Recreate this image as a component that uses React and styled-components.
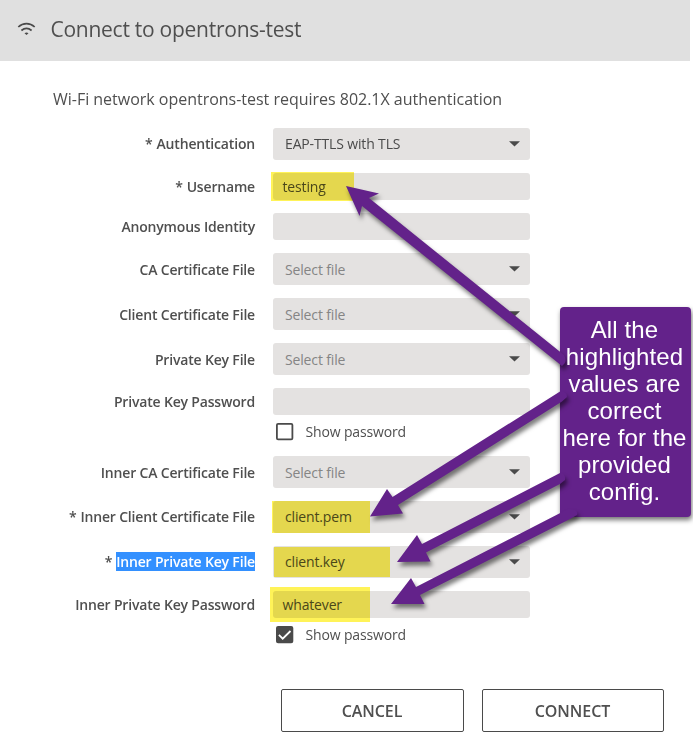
import React from 'react';
import styled, { createGlobalStyle } from 'styled-components';

const GlobalStyle = createGlobalStyle`
  * { box-sizing: border-box; }
  body { margin: 0; background: #fff; overflow: hidden; }
`;

const Page = styled.main`
  position: relative;
  width: 693px;
  height: 748px;
  background: #fff;
  color: #4f4f4f;
  font-family: 'Open Sans', 'Noto Sans', sans-serif;
`;

const Header = styled.header`
  display: flex;
  align-items: center;
  width: 690px;
  height: 61px;
  padding: 0 0 3px 17px;
  gap: 14.5px;
  background: #e0e0e0;
`;

const Title = styled.h1`
  margin: 0;
  font-size: 21px;
  font-weight: 400;
  line-height: 30px;
  letter-spacing: -0.26px;
`;

const Intro = styled.p`
  margin: 0;
  padding: 27px 0 0 53px;
  height: 67px;
  font-size: 16px;
  line-height: 22px;
  letter-spacing: -0.015px;
`;

const Form = styled.form`
  display: flex;
  flex-direction: column;
  gap: 13px;
  width: 530px;
`;

const Row = styled.div`
  display: grid;
  grid-template-columns: 255px 257px;
  column-gap: 18px;
  letter-spacing: -0.15px;
`;

const Label = styled.label`
  display: flex;
  align-items: center;
  justify-content: flex-end;
  gap: 4px;
  padding-bottom: ${(p) => (p.$raised ? 2 : 0)}px;
  font-size: 14px;
  font-weight: 600;
  line-height: 19px;
  letter-spacing: -0.175px;
  white-space: pre;
`;

const Selected = styled.span`
  background: #3390ff;
  color: #fff;
`;

const Field = styled.div`
  position: relative;
  display: flex;
  align-items: center;
  justify-content: space-between;
  height: ${(p) => (p.$select ? 32 : 27)}px;
  padding: 0 10px 0 ${(p) => (p.$select ? 12 : 9.5)}px;
  border-radius: 3px;
  background: #e4e2e1;
  color: ${(p) => (p.$placeholder ? '#858585' : '#4a4a4a')};
  font-size: 14px;
  line-height: 19px;
`;

const Value = styled.span`
  padding-bottom: ${(p) => (p.$raised ? 2 : 0)}px;
`;

const Marker = styled.span`
  position: absolute;
  left: ${(p) => p.$box[0]}px;
  top: ${(p) => p.$box[1]}px;
  width: ${(p) => p.$box[2]}px;
  height: ${(p) => p.$box[3]}px;
  background: #fff358;
  mix-blend-mode: multiply;
`;

const CheckLine = styled.div`
  grid-column: 2;
  display: flex;
  align-items: center;
  height: 28px;
  padding: 5px 0 0 3px;
  gap: 11.5px;
  font-size: 14px;
  line-height: 19px;
`;

const Actions = styled.footer`
  display: flex;
  gap: 18px;
  padding: 43px 0 0 281px;
`;

const Button = styled.button`
  width: ${(p) => p.$width}px;
  height: 43px;
  padding: 0 1px 0 0;
  border: 1px solid #4a4a4a;
  border-radius: 2px;
  background: #fff;
  color: #4f4f4f;
  font: 600 16px/22px 'Open Sans', 'Noto Sans', sans-serif;
  letter-spacing: -0.05px;
`;

const Callout = styled.aside`
  position: absolute;
  left: 560px;
  top: 307px;
  width: 131px;
  height: 210px;
  border-radius: 4px;
  background: #63228a;
  box-shadow: 1px 3px 5px rgba(0, 0, 0, 0.55);
`;

const CalloutText = styled.p`
  position: absolute;
  left: 558px;
  top: 316px;
  width: 133px;
  margin: 0;
  color: #fff;
  text-align: center;
  white-space: pre-line;
  font: 24px/27px 'Liberation Sans', Arial, sans-serif;
  letter-spacing: 0.12px;
`;

const Arrows = styled.svg`
  position: absolute;
  left: 0;
  top: 0;
  filter: drop-shadow(2px 4px 2px rgba(0, 0, 0, 0.5));
`;

const WifiIcon = () => (
  <svg width="19" height="14" viewBox="0 0 19 14" fill="none" stroke="#4a4a4a" strokeWidth="1.7">
    <path d="M1.3 5C6 .6 13 .6 17.700 5M4.400 8.500C7.500 5.900 11.500 5.900 14.600 8.500" />
    <path d="M7.500 11.200Q9.500 9.900 11.500 11.200L9.500 13Z" fill="#4a4a4a" stroke="none" />
  </svg>
);

const Caret = () => (
  <svg width="11" height="6" viewBox="0 0 11 6"><path d="M0 0.300H11L5.500 5.500Z" fill="#4a4a4a" /></svg>
);

const CheckBox = ({ checked }) => (
  <svg width="18" height="18" viewBox="0 0 18 18">
    <rect x="0.900" y="0.900" width="15.500" height="15.500" rx="1.200" fill={checked ? '#4a4a4a' : '#fff'} stroke="#4a4a4a" strokeWidth="1.800" />
    {checked && <path d="M2.900 8.900L6.700 12.700L14.500 5" fill="none" stroke="#fff" strokeWidth="1.800" />}
  </svg>
);

const rows = [
  { label: 'Authentication', required: true, select: true, value: 'EAP-TTLS with TLS' },
  { label: 'Username', required: true, value: 'testing', marker: [-2, -1, 83, 29] },
  { label: 'Anonymous Identity' },
  { label: 'CA Certificate File', select: true },
  { label: 'Client Certificate File', select: true },
  { label: 'Private Key File', select: true },
  { label: 'Private Key Password', check: 'off' },
  { label: 'Inner CA Certificate File', select: true },
  { label: 'Inner Client Certificate File', required: true, select: true, value: 'client.pem', marker: [-1, 0, 98, 32] },
  { label: 'Inner Private Key File', required: true, select: true, value: 'client.key', marker: [1, 1, 116, 30], selected: true },
  { label: 'Inner Private Key Password', value: 'whatever', marker: [-3, -4, 100, 35], check: 'on' },
];

const FormRow = ({ label, required, select, value, marker, check, selected }) => {
  const raised = Boolean(select && value);
  return (
    <Row>
      <Label $raised={raised}>
        {required && <span>*</span>}
        {selected ? <Selected>{label}</Selected> : <span>{label}</span>}
      </Label>
      <Field $select={select} $placeholder={!value}>
        <Value $raised={raised}>{value || (select ? 'Select file' : '')}</Value>
        {select && <Caret />}
        {marker && <Marker $box={marker} />}
      </Field>
      {check && (
        <CheckLine>
          <CheckBox checked={check === 'on'} />
          <span>Show password</span>
        </CheckLine>
      )}
    </Row>
  );
};

export default function App() {
  return (
    <Page>
      <GlobalStyle />
      <Header>
        <WifiIcon />
        <Title>Connect to opentrons-test</Title>
      </Header>
      <Intro>Wi-Fi network opentrons-test requires 802.1X authentication</Intro>
      <Form>
        {rows.map((row) => <FormRow key={row.label} {...row} />)}
      </Form>
      <Actions>
        <Button $width={183}>CANCEL</Button>
        <Button $width={182}>CONNECT</Button>
      </Actions>
      <Callout />
      <Arrows width="693" height="748" viewBox="0 0 693 748" fill="#63228a">
        <path d="M346 186L379 193.500L369 198L564 355Q568 362 562 366L362 206L359.500 216Z" />
        <path d="M370 516.500L387 489L392.500 497L560 391.500Q567 391 567 397L562 401.500L398 505L403 513.500Z" />
        <path d="M397 562L417 535L422 544L560 473Q566 474 565 480L560 484L426 552.500L430.500 561.500Z" />
        <path d="M391 604L411 578L416 587L568 509Q579 509 577 515L570 519L420 595L424.500 604Z" />
      </Arrows>
      <CalloutText>
        {'All the\nhighlighted\nvalues are\ncorrect\nhere for the\nprovided\nconfig.'}
      </CalloutText>
    </Page>
  );
}
